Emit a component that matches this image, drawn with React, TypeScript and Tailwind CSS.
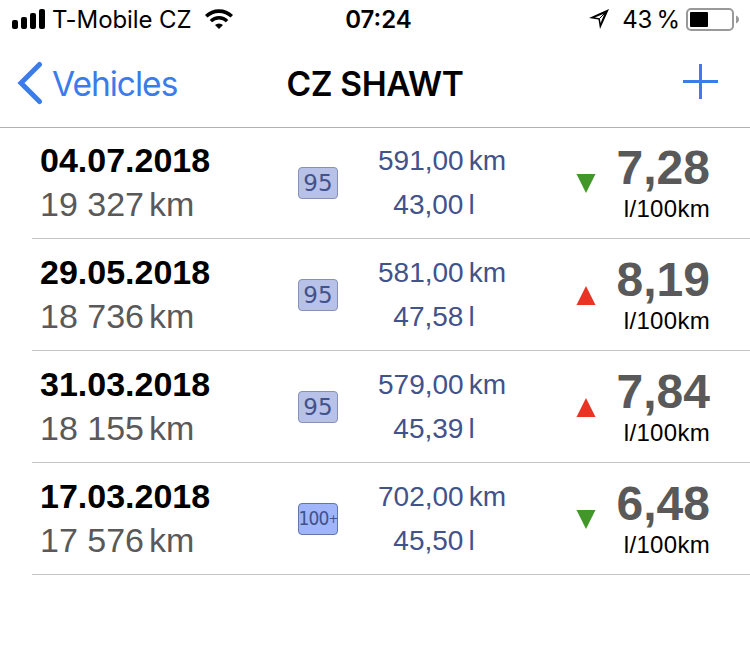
interface Refuel {
  date: string
  odometer: string
  fuel: string
  distance: string
  volume: string
  consumption: string
  trend: 'up' | 'down'
}

const refuels: Refuel[] = [
  { date: '04.07.2018', odometer: '19 327', fuel: '95', distance: '591,00', volume: '43,00', consumption: '7,28', trend: 'down' },
  { date: '29.05.2018', odometer: '18 736', fuel: '95', distance: '581,00', volume: '47,58', consumption: '8,19', trend: 'up' },
  { date: '31.03.2018', odometer: '18 155', fuel: '95', distance: '579,00', volume: '45,39', consumption: '7,84', trend: 'up' },
  { date: '17.03.2018', odometer: '17 576', fuel: '100+', distance: '702,00', volume: '45,50', consumption: '6,48', trend: 'down' },
]

function StatusBar() {
  return (
    <div className="grid h-10 grid-cols-[1fr_auto_1fr] items-center pl-3 pr-[11px] text-[24px] leading-10 text-black">
      <div className="flex items-center">
        <svg width="34" height="20" viewBox="0 0 34 20" className="-mt-0.5 shrink-0">
          <rect x="0" y="11" width="6" height="9" rx="2" />
          <rect x="9" y="8" width="6" height="12" rx="2" />
          <rect x="18" y="4" width="6" height="16" rx="2" />
          <rect x="27" y="0" width="6" height="20" rx="2" />
        </svg>
        <span className="ml-1.5 whitespace-nowrap tracking-[-0.1px]">T-Mobile CZ</span>
        <svg width="28" height="20" viewBox="0 0 28 20" className="ml-[14px] -mt-0.5 shrink-0" fill="none" stroke="#000">
          <path d="M1.200 7.300a18.300 18.300 0 0 1 25.600 0" strokeWidth="3.6" />
          <path d="M5.900 12.100a11.500 11.500 0 0 1 16.200 0" strokeWidth="3.4" />
          <path d="M14 20l-4-4a5.800 5.800 0 0 1 8 0z" fill="#000" stroke="none" />
        </svg>
      </div>
      <span className="ml-1.5 font-semibold">07:24</span>
      <div className="flex items-center justify-end">
        <svg width="20" height="20" viewBox="0 0 20 20" className="-mt-0.5 mr-[13px]">
          <path
            d="M20 0L11 20L9.500 10.500L0 9z M15.500 4.500L5.800 8.400L10.800 9.200L11.600 14z"
            fillRule="evenodd"
          />
          <path d="M10.500 9.500L17 3" stroke="#000" strokeWidth="1" />
        </svg>
        <span className="mr-[6px] whitespace-nowrap tracking-[-0.2px] [word-spacing:-2px]">43 %</span>
        <svg width="53" height="24" viewBox="0 0 53 24" className="-mt-px shrink-0">
          <rect x="1" y="1" width="46" height="21" rx="4" fill="none" stroke="#999" strokeWidth="2" />
          <rect x="4" y="4" width="18" height="15" rx="1" />
          <path d="M50 7.500c4 1.500 4 6.500 0 8z" fill="#999" />
        </svg>
      </div>
    </div>
  )
}

function NavBar() {
  return (
    <div className="grid grow grid-cols-[1fr_auto_1fr] items-center px-[17px] text-[33.5px] leading-10">
      <button className="flex items-center text-[#3b7bec]">
        <svg width="26" height="44" viewBox="0 0 26 44" className="-mt-0.5" fill="none" stroke="currentColor" strokeWidth="5" strokeLinecap="round" strokeLinejoin="miter">
          <path d="M22.5 3.500L4 22l18.500 18.500" />
        </svg>
        <span className="ml-[9px] tracking-[-1px]">Vehicles</span>
      </button>
      <h1 className="font-semibold tracking-[-0.4px] text-black">CZ SHAWT</h1>
      <button className="mr-[15px] mb-1 justify-self-end text-[#3b7bec]">
        <svg width="35" height="35" viewBox="0 0 35 35" fill="currentColor">
          <rect x="0" y="16" width="35" height="3" />
          <rect x="16" y="0" width="3" height="35" />
        </svg>
      </button>
    </div>
  )
}

function FuelBadge({ fuel }: { fuel: string }) {
  if (fuel === '100+') {
    return (
      <div className="flex h-8 w-10 items-center justify-center rounded-[4px] border border-[#6076ad] bg-[#a0b5fa] pb-px font-['DejaVu_Sans_Condensed','DejaVu_Sans',sans-serif] text-[19px] tracking-[-0.9px] text-[#42528b]">
        100<span className="text-[13px]">+</span>
      </div>
    )
  }

  return (
    <div className="flex h-8 w-10 items-center justify-center rounded-[4px] border border-[#8790b8] bg-[#b8c1e7] pt-px font-['DejaVu_Sans',sans-serif] text-[23px] text-[#42528b]">
      {fuel}
    </div>
  )
}

function Trend({ trend }: { trend: 'up' | 'down' }) {
  return (
    <svg width="20" height="19" viewBox="0 0 20 19">
      {trend === 'down' ? (
        <path d="M.5 0h19L10 19z" fill="#43962a" />
      ) : (
        <path d="M.5 19h19L10 0z" fill="#e93323" />
      )}
    </svg>
  )
}

function RefuelRow({ refuel }: { refuel: Refuel }) {
  return (
    <li className="ml-8 flex h-28 border-b border-[#c4c4c6] pl-2 pr-10">
      <div className="w-[258px] pt-[11px] text-[34px] leading-[44px]">
        <div className="font-bold text-black">{refuel.date}</div>
        <div className="flex gap-[5px] text-[#595959]">
          <span>{refuel.odometer}</span>
          <span>km</span>
        </div>
      </div>
      <div className="w-10 pt-10">
        <FuelBadge fuel={refuel.fuel} />
      </div>
      <div className="flex w-[208px] flex-col items-center pt-3 text-[28px] leading-[44px] text-[#42528b]">
        <div className="flex gap-[5px]">
          <span>{refuel.distance}</span>
          <span>km</span>
        </div>
        <div className="mr-4 flex gap-[5px]">
          <span>{refuel.volume}</span>
          <span>l</span>
        </div>
      </div>
      <div className="ml-[30px] pt-[47px]">
        <Trend trend={refuel.trend} />
      </div>
      <div className="grow pt-[14px] text-right">
        <div className="text-[48px] font-bold leading-[54px] text-[#595959]">{refuel.consumption}</div>
        <div className="text-[24px] leading-7 tracking-[0.3px] text-black">l/100km</div>
      </div>
    </li>
  )
}

export default function App() {
  return (
    <div className="h-[652px] w-[750px] overflow-hidden bg-white font-['Liberation_Sans',sans-serif]">
      <header className="flex h-32 flex-col border-b border-[#b2b2b2] font-['Inter',sans-serif]">
        <StatusBar />
        <NavBar />
      </header>
      <ul className="-mt-px">
        {refuels.map((refuel) => (
          <RefuelRow key={refuel.date} refuel={refuel} />
        ))}
      </ul>
    </div>
  )
}
